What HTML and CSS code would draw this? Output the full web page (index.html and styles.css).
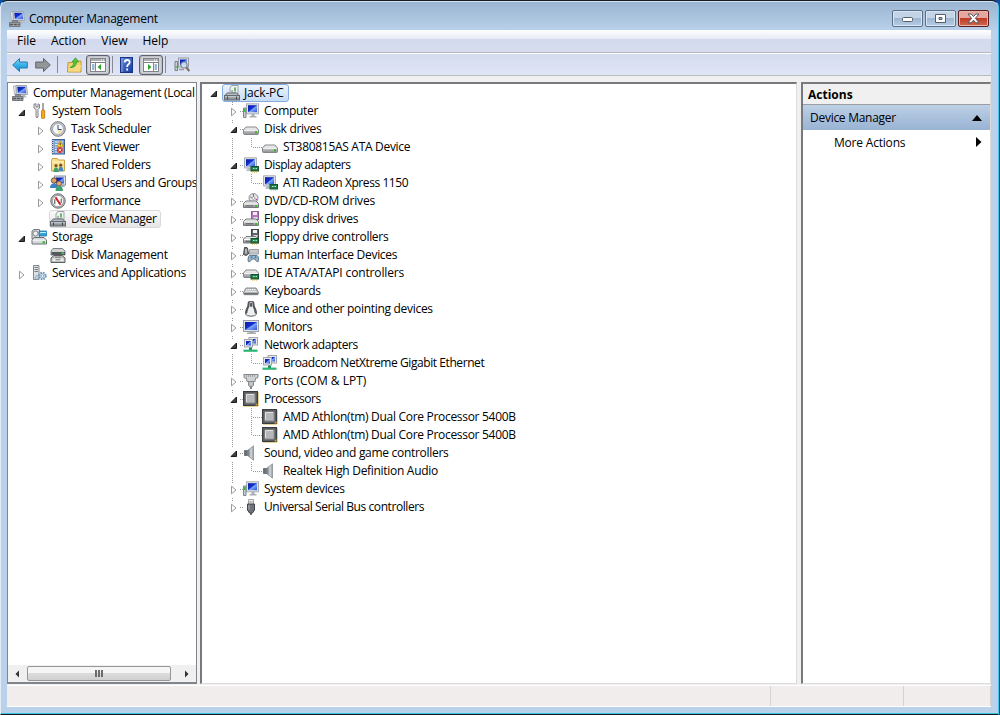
FILE: index.html
```html
<!DOCTYPE html>
<html lang="en">
<head>
  <meta charset="UTF-8">
  <meta name="viewport" content="width=device-width, initial-scale=1.0">
  <title>Computer Management</title>
  <link rel="stylesheet" href="styles.css">
</head>
<body>
  <svg class="sprite" width="0" height="0">
    <defs>
      <linearGradient id="screen" x1="0" y1="0" x2="1" y2="1">
        <stop offset="0" stop-color="#0a1ca8"/>
        <stop offset=".45" stop-color="#1230cf"/>
        <stop offset=".55" stop-color="#7fa4f5"/>
        <stop offset="1" stop-color="#2a50dc"/>
      </linearGradient>
      <linearGradient id="metal" x1="0" y1="0" x2="0" y2="1">
        <stop offset="0" stop-color="#f4f4f4"/>
        <stop offset="1" stop-color="#8d9093"/>
      </linearGradient>
      <linearGradient id="cone" x1="0" y1="0" x2="1" y2="0">
        <stop offset="0" stop-color="#5d646b"/>
        <stop offset=".6" stop-color="#d5dae0"/>
        <stop offset="1" stop-color="#8b9198"/>
      </linearGradient>
      <linearGradient id="blueArrow" x1="0" y1="0" x2="0" y2="1">
        <stop offset="0" stop-color="#8fd8f8"/>
        <stop offset=".5" stop-color="#35b0ea"/>
        <stop offset="1" stop-color="#1a8fd0"/>
      </linearGradient>
      <linearGradient id="helpBlue" x1="0" y1="0" x2="1" y2="1">
        <stop offset="0" stop-color="#5e85de"/>
        <stop offset="1" stop-color="#173a9c"/>
      </linearGradient>
    </defs>
    <symbol id="open" viewBox="0 0 8 8"><path d="M6.500 1v5.500H1z" fill="#404040" stroke="#1c1c1c"/></symbol>
    <symbol id="closed" viewBox="0 0 8 10"><path d="M1.500 1.200v7.600l4.500-3.800z" fill="#fff" stroke="#9a9a9a"/></symbol>
    <symbol id="monitor" viewBox="0 0 16 16">
      <path d="M6 12h5v1.500h2V15H4v-1.500h2z" fill="#a9adb2"/>
      <rect x=".5" y="1.500" width="15" height="11" fill="#dfe3e8" stroke="#9ba1a8"/>
      <rect x="2" y="3" width="12" height="8" fill="url(#screen)"/>
    </symbol>
    <symbol id="mgmt" viewBox="0 0 16 16">
      <path d="M1.500 1H4v8.500H2.500z" fill="#f4f5f6" stroke="#a0a5aa" stroke-width=".8"/>
      <path d="M4 .5h10.500l1 9H5z" fill="#e3e6ea" stroke="#a0a5ac"/>
      <path d="M5.200 1.800h8.300l.8 6.400H6z" fill="url(#screen)"/>
      <path d="M9 10h4l2 2.500h-4z" fill="#b9bdc1"/>
      <path d="M3.500 9.500h5v2h-5z" fill="#8b9095" stroke="#63676b" stroke-width=".7"/>
      <path d="M.5 11.500h10.500v4H.5z" fill="#a9acae" stroke="#75787b"/>
      <path d="M1 13.500h9.500" stroke="#55585b" stroke-width="1.500" stroke-dasharray="3 .8"/>
    </symbol>
    <symbol id="tools" viewBox="0 0 16 16">
      <path d="M3 1v4l2 1.500V14q1 1.500 2 0V6.500L8.500 5V1.500L7 .8V4H5V.8z" fill="#e9e9e9" stroke="#75787b" stroke-width=".9"/>
      <path d="M12 0v8" stroke="#8a8d90" stroke-width="1.500"/>
      <rect x="10.500" y="7" width="3.200" height="8.500" rx="1.200" fill="#f5a91b" stroke="#c06e08" stroke-width=".8"/>
    </symbol>
    <symbol id="clock" viewBox="0 0 16 16">
      <circle cx="8" cy="8" r="7.300" fill="#c4c6c9" stroke="#77797d"/>
      <circle cx="8" cy="8" r="5.400" fill="#f3f8fd" stroke="#999" stroke-width=".7"/>
      <path d="M8 8.500h4.500A4.500 4.500 0 0 1 8 12.700z" fill="#f4e2b4"/>
      <path d="M8 4v4.500h3.500" fill="none" stroke="#334a6b"/>
    </symbol>
    <symbol id="event" viewBox="0 0 16 16">
      <rect x="2.500" y=".5" width="12" height="14.500" fill="#7d9fd3" stroke="#3d5f96"/>
      <path d="M5 3h8M5 5.500h4M5 8h8M5 10.500h8M5 13h8" stroke="#e5eefa"/>
      <path d="M2.500 1v14" stroke="#c9ccd1" stroke-width="2.500" stroke-dasharray="1 1"/>
      <path d="M10.200 1.800l3.500 6h-7z" fill="#ffd22e" stroke="#b98a10" stroke-width=".7"/>
      <path d="M10.200 3.800v2.500" stroke="#333"/>
      <circle cx="9.800" cy="11" r="3" fill="#dd3327"/>
      <path d="M8.500 9.700l2.600 2.600m0-2.600l-2.600 2.600" stroke="#fff" stroke-width=".9"/>
    </symbol>
    <symbol id="shared" viewBox="0 0 16 16">
      <path d="M1.500 3.500l1-2h5l1 1.500h6v11h-13z" fill="#f7e08c" stroke="#c9a446"/>
      <path d="M2 5h12" stroke="#fff5c7"/>
      <circle cx="6" cy="8.700" r="1.600" fill="#77512f"/><circle cx="10.700" cy="8.200" r="1.600" fill="#77512f"/>
      <path d="M3.500 15q0-4.500 2.500-4.500t2.700 4.500z" fill="#3aa06d"/><path d="M8.500 14.200q0-4.400 2.300-4.400t2.500 4.400z" fill="#4387c8"/>
    </symbol>
    <symbol id="users" viewBox="0 0 16 16">
      <rect x="4.500" y="1" width="11" height="9" fill="#dfe3e8" stroke="#8c939c"/>
      <rect x="6" y="2.500" width="8" height="6" fill="url(#screen)"/>
      <path d="M10 10h4l1 2h-5z" fill="#a5a9ae"/>
      <circle cx="4" cy="5.500" r="2.700" fill="#d9a070" stroke="#5d3818" stroke-width=".8"/>
      <path d="M0 13q0-4.500 4-4.500t4 4.500z" fill="#3c80ca"/>
      <circle cx="9" cy="8.500" r="2.400" fill="#e5b07d" stroke="#6e4524" stroke-width=".8"/>
      <path d="M5.500 16q0-5 3.700-5t3.800 5z" fill="#3da072"/>
    </symbol>
    <symbol id="perf" viewBox="0 0 16 16">
      <circle cx="8" cy="8" r="7.200" fill="#b9bbbe" stroke="#6b6d70"/>
      <circle cx="8" cy="8" r="5.600" fill="#fff" stroke="#7a7c7e" stroke-width=".6"/>
      <path d="M4.800 11V6.200M11.200 10V5.500" stroke="#444" stroke-width="1"/>
      <path d="M5.500 4.300l5 7.400" stroke="#d02020" stroke-width="2"/>
    </symbol>
    <symbol id="devmgr" viewBox="0 0 16 16">
      <path d="M7.500.5H14v9H6V3z" fill="#eef0f1" stroke="#a0a4a8"/>
      <path d="M11 2.500v4" stroke="#3da341" stroke-width="1.500"/>
      <path d="M8 5v3h4" fill="none" stroke="#777c80"/>
      <path d="M3 8h10l1.800 2.500H1.200z" fill="#b8bdc1" stroke="#6a7076"/>
      <rect x=".5" y="10.500" width="15" height="4.500" fill="#8c949a" stroke="#656b70"/>
      <path d="M1 11.800h14" stroke="#d6dbde"/>
      <path d="M3.500 11.500v3M12.500 11.500v3" stroke="#42474c"/>
    </symbol>
    <symbol id="storage" viewBox="0 0 16 16">
      <path d="M1 2l2-1.500h5.500V9L1 10z" fill="#d4d6d9" stroke="#777c81"/>
      <circle cx="4.500" cy="4.500" r="2.500" fill="#eef1ef" stroke="#888"/>
      <rect x="8" y="2" width="8" height="5" rx="1" fill="#2fa3dd" stroke="#286d96" stroke-width=".8"/>
      <path d="M9 3.500h6" stroke="#c2edff"/>
      <path d="M3 8.500h10l2.500 2.500v4H1v-4z" fill="#d6d9db" stroke="#6b7074"/>
      <path d="M1.500 11.200h13.500" stroke="#f8f8f8"/>
      <rect x="11.500" y="12.200" width="2.500" height="2" fill="#39c22e"/>
    </symbol>
    <symbol id="disk" viewBox="0 0 16 16">
      <path d="M3 1.500h9.500L15 4v4H1V4z" fill="#d2d2d2" stroke="#808386"/>
      <path d="M1.500 5h13.500v3H1.500z" fill="#54595d"/><rect x="11.500" y="5.500" width="2.500" height="1.500" fill="#45d23a"/>
      <path d="M4 8.500h8l3 2.500v4.500H1V11z" fill="#c1c2c3" stroke="#5b5e61"/>
      <path d="M2.500 11.500h11v2.500h-11z" fill="#ededed"/><path d="M5 10.200h6M5.500 12.800h5" stroke="#777"/>
    </symbol>
    <symbol id="services" viewBox="0 0 16 16">
      <path d="M2.500.5H8v14H2.500z" fill="#dfe2e4" stroke="#83888d"/>
      <path d="M3.500 2.500h3.500M3.500 4.500h3.500M3.500 6.500h3.500" stroke="#777c82"/>
      <circle cx="11.500" cy="11" r="3.300" fill="#bdd5e8" stroke="#6e97b8" stroke-width="1.800" stroke-dasharray="1.600 1"/>
      <circle cx="11.500" cy="11" r="1.200" fill="#fff" stroke="#5f849f" stroke-width=".5"/>
      <circle cx="6" cy="12.500" r="1.900" fill="#bdd5e8" stroke="#708fa7" stroke-dasharray="1 .7"/>
    </symbol>
    <symbol id="computer" viewBox="0 0 16 16">
      <rect x="3.500" y=".8" width="12" height="10" fill="#dfe3e8" stroke="#a8adb3"/>
      <rect x="5" y="2.200" width="9" height="7" fill="url(#screen)"/>
      <path d="M8.500 11h3v2h2v1.500h-7V13h2z" fill="#aaafb4"/>
      <path d="M.5 5h2.500v9.500H.5z" fill="#c9cdd0" stroke="#81868b"/>
      <path d="M1.800 6v3" stroke="#2dba31" stroke-width="1.500"/>
    </symbol>
    <symbol id="drive" viewBox="0 0 16 16">
      <path d="M3 6h10l2.500 3v3.500q0 1-1 1h-13q-1 0-1-1V9z" fill="url(#metal)" stroke="#84888c"/>
      <path d="M2.500 8.500L3.500 7h9l1.200 1.500z" fill="#e7e7e7"/>
      <path d="M1 9.300h14" stroke="#fcfcfc"/>
      <rect x="12" y="10.200" width="2" height="2.300" fill="#3db52d"/>
    </symbol>
    <symbol id="card" viewBox="0 0 16 16">
      <rect x="8" y="9.500" width="7.500" height="4.500" fill="#217d4c" stroke="#155235"/>
      <path d="M9 15h5" stroke="#d6aa31" stroke-dasharray="1 1"/>
      <path d="M10 11.500h1.500M12.500 11.500H14" stroke="#b9e8bd"/>
    </symbol>
    <symbol id="display" viewBox="0 0 16 16">
      <path d="M5 11h4v3H3z" fill="#b9bdc1"/>
      <path d="M1.500.8h12v10.200h-12z" fill="#dfe3e8" stroke="#a8adb3"/>
      <rect x="3" y="2.200" width="9" height="7.300" fill="url(#screen)"/>
      <use href="#card"/>
    </symbol>
    <symbol id="dvd" viewBox="0 0 16 16">
      <circle cx="10.500" cy="5" r="4.500" fill="#e4e1ea" stroke="#95949b"/>
      <path d="M10.500 1v3M12.500 6l2 1" stroke="#a44ba4"/><path d="M7 4l2 .7" stroke="#6cae62"/><circle cx="10.500" cy="5" r="1.300" fill="#fff" stroke="#888" stroke-width=".6"/>
      <path d="M3 8h10l2.500 2.500v4h-15v-4z" fill="url(#metal)" stroke="#777b80"/>
      <path d="M1 11h14" stroke="#fff"/><path d="M2.500 12.800h8" stroke="#686c70"/>
      <rect x="12" y="12" width="2" height="2" fill="#3db52d"/>
    </symbol>
    <symbol id="floppy" viewBox="0 0 16 16">
      <rect x="8.500" y=".5" width="7" height="8" fill="#b377bb" stroke="#8f6095"/>
      <rect x="10" y="1" width="4" height="3" fill="#f3eaf4"/><rect x="10.500" y="6" width="4" height="2" fill="#ddd"/>
      <path d="M3 8h10l2.500 2.500v4h-15v-4z" fill="url(#metal)" stroke="#777b80"/>
      <path d="M1 11h14" stroke="#fff"/><path d="M2.500 12.800h8" stroke="#55585c"/>
      <rect x="12" y="12" width="2" height="2" fill="#3db52d"/>
    </symbol>
    <symbol id="floppyctl" viewBox="0 0 16 16">
      <rect x="8.500" y=".5" width="7" height="8" fill="#606468" stroke="#414449"/>
      <rect x="10" y="1" width="4" height="3" fill="#f3f3f4"/><rect x="10.500" y="6" width="4" height="2" fill="#ddd"/>
      <path d="M3 7.500h10l2.500 2.500v4h-15v-4z" fill="url(#metal)" stroke="#777b80"/>
      <path d="M1 10.500h14" stroke="#fff"/><path d="M2.500 12.300h6" stroke="#55585c"/>
      <use href="#card"/>
    </symbol>
    <symbol id="hid" viewBox="0 0 16 16">
      <path d="M1.500.5Q3 0 4.500 1l1 6Q3.500 9.500.5 7.500z" fill="#777e86" stroke="#454a50"/>
      <path d="M3 2v4.500" stroke="#e9ebed"/>
      <path d="M6.500 2.500h9v4.500h-9z" fill="#dfe1e4" stroke="#9b9fa4"/><path d="M7.500 4h8M7.500 5.700h8" stroke="#888" stroke-dasharray="1 1"/>
      <path d="M5.500 9.500q1-2 3-1h3.500q2-1 3 1l.8 4q-.6 2.500-2.500.6L11.800 12H9.200L7 14.500q-2 1-2-1.500z" fill="#a4b5c5" stroke="#5c7489"/>
      <circle cx="8.500" cy="10.200" r="1" fill="#1f86ca"/><circle cx="12.500" cy="10.200" r="1" fill="#1f86ca"/>
    </symbol>
    <symbol id="ide" viewBox="0 0 16 16">
      <path d="M3 5h10l2.500 3v3.500q0 1-1 1h-13q-1 0-1-1V8z" fill="url(#metal)" stroke="#84888c"/>
      <path d="M2.500 7.500L3.500 6h9l1.200 1.500z" fill="#e7e7e7"/>
      <path d="M1 8.300h14" stroke="#f8f8f8"/>
      <use href="#card"/>
    </symbol>
    <symbol id="keyboard" viewBox="0 0 16 16">
      <path d="M3 5h10l2.500 4.500-.8 2.200H1.300L.5 9.500z" fill="#b9bcbf" stroke="#85898d"/>
      <path d="M3 6.700h10M2.200 8.500h11.600" stroke="#f8f8f8" stroke-width="1.200" stroke-dasharray="1.300 .7"/>
      <path d="M.8 10.700h14.400" stroke="#6d7175" stroke-width="1.500"/>
    </symbol>
    <symbol id="mouse" viewBox="0 0 16 16">
      <path d="M5.500.7q2.500-.6 5 0l.5 4q3 5 2.500 8.500-1 2-5.500 2t-5.500-2q-.5-3.500 2.500-8.500z" fill="#eeeff0" stroke="#5c6167"/>
      <path d="M5.800 1L5.500 5q-2 4-2.200 7.500M10.200 1l.3 4q2 4 2.200 7.500" fill="none" stroke="#51565c" stroke-width="1.800"/>
      <rect x="7" y="1.500" width="2" height="4.500" rx="1" fill="#555a60"/>
    </symbol>
    <symbol id="network" viewBox="0 0 16 16">
      <rect x="6" y=".5" width="8.500" height="7.500" fill="#e7e9ec" stroke="#a1a6ae"/><rect x="7.500" y="2" width="5.500" height="4.500" fill="url(#screen)"/>
      <rect x="1.500" y="2.500" width="8" height="7.500" fill="#e7e9ec" stroke="#a1a6ae"/><rect x="3" y="4" width="5" height="4.500" fill="url(#screen)"/>
      <path d="M7.500 10.500v3" stroke="#168c55" stroke-width="3"/><path d="M.5 13.700h14" stroke="#2cb575" stroke-width="2.200"/>
    </symbol>
    <symbol id="port" viewBox="0 0 16 16">
      <path d="M.8 1.500h14.400l-.5 3.500h-2L12 8.500H4L3.300 5h-2z" fill="#cfd2d5" stroke="#83888d"/>
      <path d="M3 3h10" stroke="#777" stroke-dasharray="1 1"/>
      <path d="M5.500 8.500h5v4l-1.500 1.200h-2l-1.500-1.200z" fill="#bfc3c7" stroke="#84898e"/><path d="M8 13.500V16" stroke="#777b80" stroke-width="1.800"/>
    </symbol>
    <symbol id="cpu" viewBox="0 0 16 16">
      <path d="M1.500 15.500h14M15.500 1.500v14" stroke="#caa02d" stroke-dasharray="1 1"/>
      <rect x=".5" y=".5" width="14" height="14" fill="#5a5d60" stroke="#3b3e41"/>
      <rect x="3" y="3" width="9" height="9" fill="#b5b7b9" stroke="#8d9093"/>
      <path d="M3.500 11V3.500H11" fill="none" stroke="#e1e1e1"/><path d="M12 14.500l2.500-2.500v2.500z" fill="#e9a82a"/>
    </symbol>
    <symbol id="sound" viewBox="0 0 16 16">
      <path d="M1.500 5.500h3v5h-3z" fill="#6b7178" stroke="#50565c" stroke-width=".7"/>
      <path d="M4.500 5.500L10.500.8v14.400l-6-4.700z" fill="url(#cone)" stroke="#83898f" stroke-width=".7"/>
    </symbol>
    <symbol id="usb" viewBox="0 0 16 16">
      <path d="M5.500.5h5v5h-5z" fill="#eeeff0" stroke="#a2a6ab"/><path d="M7 2v2M9 2v2" stroke="#999"/>
      <path d="M4.500 5h7v6L9.500 14h-3l-2-3z" fill="#6d7379" stroke="#42474c"/><path d="M6 6v4.500" stroke="#b2b7bb"/><path d="M8 14v2" stroke="#4b5055" stroke-width="1.600"/>
    </symbol>
    <symbol id="back" viewBox="0 0 16 16"><path d="M.7 8L7.500 1.500V5h7.800v6H7.500v3.500z" fill="url(#blueArrow)" stroke="#2b79a9"/></symbol>
    <symbol id="forward" viewBox="0 0 16 16"><path d="M15.300 8L8.500 1.500V5H.7v6h7.800v3.500z" fill="#929699" stroke="#606468"/></symbol>
    <symbol id="upfolder" viewBox="0 0 16 16">
      <path d="M1.500 15l.5-9.500h4l1-1.500h8v11z" fill="#f3d273" stroke="#c39a3d"/>
      <path d="M2 14.500l1.500-6.500H15l-1 6.500z" fill="#f6d983"/>
      <path d="M4 10.500q4-1 4-5.500H6L9.500.8 12.500 5h-2q-.5 6-6.500 5.500z" fill="#51cb34" stroke="#2a8e1c" stroke-width=".7"/>
    </symbol>
    <symbol id="pane" viewBox="0 0 16 16">
      <rect x=".5" y="1.500" width="15" height="13" fill="#fff" stroke="#808488"/>
      <path d="M1 3h14" stroke="#aaaeb2" stroke-width="2"/><path d="M11 3h4" stroke="#fff" stroke-dasharray="1 1"/>
      <path d="M1 5.500h14" stroke="#797d81"/>
    </symbol>
    <symbol id="paneleft" viewBox="0 0 16 16"><use href="#pane"/><path d="M5.500 6v8" stroke="#888"/><path d="M2 8h2.500M2 10h2.500M2 12h2.500" stroke="#3a6ea5"/><path d="M11 7v6L7.500 10z" fill="#2da329"/></symbol>
    <symbol id="paneright" viewBox="0 0 16 16"><use href="#pane"/><path d="M10.500 6v8" stroke="#888"/><path d="M11.500 8H14M11.500 10H14M11.500 12H14" stroke="#3a6ea5"/><path d="M5 7v6l3.500-3z" fill="#2da329"/></symbol>
    <symbol id="help" viewBox="0 0 16 16">
      <rect x="1.500" y=".5" width="12" height="15" fill="url(#helpBlue)" stroke="#173784"/><path d="M3 1v14" stroke="#89a6e6"/>
      <path d="M5.700 5.500Q5.700 3 8.200 3t2.500 2.200Q10.700 6.700 9.200 7.500 8.200 8.200 8.200 10M8.200 11.500v2" fill="none" stroke="#fff" stroke-width="1.800"/>
    </symbol>
    <symbol id="scan" viewBox="0 0 16 16">
      <path d="M1 4.500h2.500v9H1z" fill="#cfd2d5" stroke="#777d83"/><path d="M2.200 9v2" stroke="#39b735"/>
      <rect x="4.500" y="1" width="10" height="9" fill="#dce1e8" stroke="#979ca3"/><rect x="6" y="2.500" width="7" height="6" fill="url(#screen)"/>
      <path d="M5 12.500h5" stroke="#979ca2" stroke-width="1.500"/>
      <circle cx="10" cy="8" r="3.200" fill="#cfe6f7" fill-opacity=".85" stroke="#777d83"/><path d="M12.300 10.500l3 3.500" stroke="#7a6f60" stroke-width="2"/>
    </symbol>
  </svg>

  <div class="window">
    <header class="titlebar">
      <svg class="icon"><use href="#mgmt"/></svg>
      <h1>Computer Management</h1>
      <div class="window-buttons">
        <button aria-label="Minimize"><svg class="min" width="13" height="6"><rect x="1.500" y=".5" width="10" height="4" rx="1" fill="#fff" stroke="#555f6c"/></svg></button>
        <button aria-label="Maximize"><svg width="11" height="9"><path fill-rule="evenodd" d="M.5.5h10v8H.5zM4 3.500v2h3v-2z" fill="#fff" stroke="#555f6c"/></svg></button>
        <button class="close" aria-label="Close"><svg width="13" height="11"><path d="M1 1h3.200l2.300 2.500L8.800 1H12L8.400 5.300 12 9.800H8.800L6.500 7.200 4.200 9.800H1l3.600-4.500z" fill="#fff" stroke="#55535f"/></svg></button>
      </div>
    </header>

    <div class="client">
      <nav class="menubar">
        <span>File</span><span>Action</span><span>View</span><span>Help</span>
      </nav>
      <div class="toolbar">
        <svg class="icon"><use href="#back"/></svg>
        <svg class="icon forward"><use href="#forward"/></svg>
        <i class="sep"></i>
        <svg class="icon folder"><use href="#upfolder"/></svg>
        <span class="pressed"><svg class="icon"><use href="#paneleft"/></svg></span>
        <i class="sep tight"></i>
        <svg class="icon"><use href="#help"/></svg>
        <span class="pressed last"><svg class="icon"><use href="#paneright"/></svg></span>
        <i class="sep tight"></i>
        <svg class="icon scan"><use href="#scan"/></svg>
      </div>

      <div class="panes">
        <section class="pane console">
          <ul class="tree">
            <li class="row root"><svg class="icon"><use href="#mgmt"/></svg><span>Computer Management (Local</span></li>
            <li class="row"><svg class="arrow"><use href="#open"/></svg><svg class="icon"><use href="#tools"/></svg><span>System Tools</span></li>
            <li class="row sub"><svg class="arrow"><use href="#closed"/></svg><svg class="icon"><use href="#clock"/></svg><span>Task Scheduler</span></li>
            <li class="row sub"><svg class="arrow"><use href="#closed"/></svg><svg class="icon"><use href="#event"/></svg><span>Event Viewer</span></li>
            <li class="row sub"><svg class="arrow"><use href="#closed"/></svg><svg class="icon"><use href="#shared"/></svg><span>Shared Folders</span></li>
            <li class="row sub"><svg class="arrow"><use href="#closed"/></svg><svg class="icon"><use href="#users"/></svg><span>Local Users and Groups</span></li>
            <li class="row sub"><svg class="arrow"><use href="#closed"/></svg><svg class="icon"><use href="#perf"/></svg><span>Performance</span></li>
            <li class="row sub"><i class="arrow"></i><div class="current"><svg class="icon"><use href="#devmgr"/></svg><span>Device Manager</span></div></li>
            <li class="row"><svg class="arrow"><use href="#open"/></svg><svg class="icon"><use href="#storage"/></svg><span>Storage</span></li>
            <li class="row sub"><i class="arrow"></i><svg class="icon"><use href="#disk"/></svg><span>Disk Management</span></li>
            <li class="row"><svg class="arrow"><use href="#closed"/></svg><svg class="icon"><use href="#services"/></svg><span>Services and Applications</span></li>
          </ul>
          <div class="scrollbar">
            <svg width="19" height="16"><path d="M11 4.500v7L7.500 8z" fill="#333"/></svg>
            <div class="thumb"><i></i><i></i><i></i></div>
            <svg width="24" height="16"><path d="M14 4.500v7L17.500 8z" fill="#333"/></svg>
          </div>
        </section>

        <section class="pane devices">
          <div class="pc"><svg class="arrow"><use href="#open"/></svg><div class="selected"><svg class="icon"><use href="#devmgr"/></svg><span class="loose">Jack-PC</span></div></div>
          <ul class="device-tree">
            <li><div class="row"><svg class="arrow"><use href="#closed"/></svg><svg class="icon"><use href="#computer"/></svg><span>Computer</span></div></li>
            <li><div class="row"><svg class="arrow"><use href="#open"/></svg><svg class="icon"><use href="#drive"/></svg><span>Disk drives</span></div>
              <ul><li class="row"><svg class="icon"><use href="#drive"/></svg><span>ST380815AS ATA Device</span></li></ul></li>
            <li><div class="row"><svg class="arrow"><use href="#open"/></svg><svg class="icon"><use href="#display"/></svg><span class="tight">Display adapters</span></div>
              <ul><li class="row"><svg class="icon"><use href="#display"/></svg><span class="tight">ATI Radeon Xpress 1150</span></li></ul></li>
            <li><div class="row"><svg class="arrow"><use href="#closed"/></svg><svg class="icon"><use href="#dvd"/></svg><span class="loose">DVD/CD-ROM drives</span></div></li>
            <li><div class="row"><svg class="arrow"><use href="#closed"/></svg><svg class="icon"><use href="#floppy"/></svg><span>Floppy disk drives</span></div></li>
            <li><div class="row"><svg class="arrow"><use href="#closed"/></svg><svg class="icon"><use href="#floppyctl"/></svg><span>Floppy drive controllers</span></div></li>
            <li><div class="row"><svg class="arrow"><use href="#closed"/></svg><svg class="icon"><use href="#hid"/></svg><span>Human Interface Devices</span></div></li>
            <li><div class="row"><svg class="arrow"><use href="#closed"/></svg><svg class="icon"><use href="#ide"/></svg><span class="loose">IDE ATA/ATAPI controllers</span></div></li>
            <li><div class="row"><svg class="arrow"><use href="#closed"/></svg><svg class="icon"><use href="#keyboard"/></svg><span>Keyboards</span></div></li>
            <li><div class="row"><svg class="arrow"><use href="#closed"/></svg><svg class="icon"><use href="#mouse"/></svg><span>Mice and other pointing devices</span></div></li>
            <li><div class="row"><svg class="arrow"><use href="#closed"/></svg><svg class="icon"><use href="#monitor"/></svg><span>Monitors</span></div></li>
            <li><div class="row"><svg class="arrow"><use href="#open"/></svg><svg class="icon"><use href="#network"/></svg><span class="tight">Network adapters</span></div>
              <ul><li class="row"><svg class="icon"><use href="#network"/></svg><span class="tight">Broadcom NetXtreme Gigabit Ethernet</span></li></ul></li>
            <li><div class="row"><svg class="arrow"><use href="#closed"/></svg><svg class="icon"><use href="#port"/></svg><span class="normal">Ports (COM &amp; LPT)</span></div></li>
            <li><div class="row"><svg class="arrow"><use href="#open"/></svg><svg class="icon"><use href="#cpu"/></svg><span class="tight">Processors</span></div>
              <ul>
                <li class="row"><svg class="icon"><use href="#cpu"/></svg><span>AMD Athlon(tm) Dual Core Processor 5400B</span></li>
                <li class="row"><svg class="icon"><use href="#cpu"/></svg><span>AMD Athlon(tm) Dual Core Processor 5400B</span></li>
              </ul></li>
            <li><div class="row"><svg class="arrow"><use href="#open"/></svg><svg class="icon"><use href="#sound"/></svg><span>Sound, video and game controllers</span></div>
              <ul><li class="row"><svg class="icon"><use href="#sound"/></svg><span>Realtek High Definition Audio</span></li></ul></li>
            <li><div class="row"><svg class="arrow"><use href="#closed"/></svg><svg class="icon"><use href="#computer"/></svg><span>System devices</span></div></li>
            <li><div class="row"><svg class="arrow"><use href="#closed"/></svg><svg class="icon"><use href="#usb"/></svg><span class="tight">Universal Serial Bus controllers</span></div></li>
          </ul>
        </section>

        <section class="pane actions">
          <h2>Actions</h2>
          <div class="action-group"><span>Device Manager</span><svg width="10" height="6"><path d="M5 0l5 6H0z"/></svg></div>
          <div class="action-item"><span>More Actions</span><svg width="6" height="10"><path d="M0 0l5.500 5L0 10z"/></svg></div>
        </section>
      </div>

      <footer class="statusbar"><span></span><span></span><span></span></footer>
    </div>
  </div>
</body>
</html>
```

FILE: styles.css
```css
* {
  box-sizing: border-box;
}

body {
  margin: 0;
  height: 715px;
  overflow: hidden;
  background: #0b4fa0;
  font-family: "Open Sans", "Noto Sans", sans-serif;
  font-size: 12px;
  color: #000;
}

ul {
  list-style: none;
  margin: 0;
  padding: 0;
}

h1, h2 {
  margin: 0;
  font-size: 12px;
}

.sprite {
  position: absolute;
}

.icon {
  width: 16px;
  height: 16px;
  flex: none;
}

.window {
  display: flex;
  flex-direction: column;
  width: 999px;
  height: 715px;
  padding: 0 7px 7px 6px;
  border: 1px solid #151b22;
  border-left-color: #e2edf8;
  border-right-color: #43c8e8;
  border-radius: 7px 7px 0 0;
  background: linear-gradient(#9ab3d0, #b9d1ea 30px);
  box-shadow: inset 0 -1px #36c3dd, inset 0 1px #d3e1ef;
}

.titlebar {
  display: flex;
  align-items: center;
  height: 29px;
  padding: 7px 2px 0 2px;
}

.titlebar h1 {
  margin: -1px 0 0 4px;
  font-weight: normal;
  letter-spacing: -0.27px;
}

.window-buttons {
  display: flex;
  gap: 2px;
  margin: -2px 0 0 auto;
}

.window-buttons button {
  display: flex;
  align-items: center;
  justify-content: center;
  width: 31px;
  height: 17px;
  padding: 0;
  border: 1px solid #5c7188;
  border-radius: 2px;
  background: linear-gradient(#c3d4e7 48%, #9eb6d1 50%, #b7cde5);
  box-shadow: inset 0 0 0 1px #d8e5f2;
}

.window-buttons .min {
  margin-top: 4px;
}

.window-buttons .close {
  border-color: #5b1c20;
  background: linear-gradient(#e5a79d 45%, #bf3a24 50%, #d06b50);
  box-shadow: inset 0 0 0 1px #e9b4aa;
}

.client {
  display: flex;
  flex-direction: column;
  flex: 1;
  background: #f0f0f0;
  border-bottom: 1px solid #fff;
}

.menubar {
  display: flex;
  gap: 15px;
  height: 24px;
  padding: 2px 0 0 10px;
  border-bottom: 1px solid #fff;
  background: linear-gradient(#fff, #e5eaf5 9px, #d3daed 9px, #d6dcee 21px, #d6dcee 22px, #b5b8c0 22px);
  line-height: 18px;
}

.toolbar {
  display: flex;
  align-items: center;
  height: 22px;
  padding-left: 5px;
  background: linear-gradient(#d4dbed, #e0e6f6);
  border-bottom: 1px solid #b9bcc4;
}

.toolbar .forward {
  margin-left: 7px;
}

.sep {
  width: 1px;
  height: 17px;
  margin: 0 8px 0 6px;
  background: #858a94;
}

.sep.tight {
  margin: 0 6px 0 2px;
}

.toolbar .pressed {
  display: flex;
  align-items: center;
  justify-content: center;
  width: 24px;
  height: 20px;
  margin-left: 4px;
  border: 1px solid #5f6369;
  border-radius: 3px;
  background: #d2d5dc;
  box-shadow: inset 0 0 2px #888;
}

.toolbar .scan {
  margin-left: 2px;
}

.panes {
  display: grid;
  grid-template-columns: 190px 597px 189px;
  column-gap: 4px;
  height: 602px;
  margin-top: 6px;
}

.pane {
  display: flex;
  flex-direction: column;
  min-width: 0;
  overflow: hidden;
  background: #fff;
  border: 1px solid #dcdcdc;
  border-top: 2px solid #77797c;
  border-left: 2px solid #77797c;
}

.console {
  border: 1px solid #82868c;
  border-bottom-width: 2px;
}

/* the left and right gutters are not the same width */
.devices {
  margin: 0 1px 0 -1px;
}

.actions {
  margin-left: -1px;
}

.row {
  display: flex;
  align-items: center;
  height: 18px;
  white-space: nowrap;
}

.row span,
.selected span {
  line-height: 18px;
  letter-spacing: -0.3px;
}

.row .tight {
  letter-spacing: -0.42px;
}

.row .loose,
.selected .loose {
  letter-spacing: -0.14px;
}

.row .normal {
  letter-spacing: 0;
}

.console .tree {
  flex: 1;
  padding-top: 1px;
}

.console .row {
  padding-left: 10px;
}

.console .sub {
  padding-left: 29px;
}

.console .root {
  padding-left: 4px;
}

.console .arrow {
  width: 8px;
  height: 10px;
  margin: 3px 5px 0 0;
  flex: none;
}

.console .row span {
  margin-left: 5px;
}

.current,
.selected {
  display: flex;
  align-items: center;
  height: 18px;
  border: 1px solid #d9d9d9;
  border-radius: 3px;
  background: linear-gradient(#fafafa, #e6e6e6);
}

.current {
  margin-left: -1px;
  padding-right: 3px;
}

.scrollbar {
  display: flex;
  align-items: center;
  height: 17px;
  background: #f0f0f0;
}

.thumb {
  display: flex;
  align-items: center;
  justify-content: center;
  gap: 1px;
  width: 144px;
  height: 15px;
  border: 1px solid #979797;
  border-radius: 2px;
  background: linear-gradient(#f5f5f5 45%, #dcdcdc 50%, #cfcfcf);
}

.thumb i {
  width: 2px;
  height: 7px;
  background: #6b6b6b;
}

.devices .pc {
  display: flex;
  align-items: center;
  height: 18px;
  padding-left: 8px;
}

.devices .arrow {
  width: 8px;
  height: 10px;
  margin-top: 2px;
  flex: none;
}

.selected {
  margin-left: 4px;
  padding: 0 4px 0 1px;
  border-color: #84acdd;
  background: linear-gradient(#ebf4fd, #c5dcf7);
}

.selected span {
  margin-left: 4px;
}

/* dotted trunk behind the expanders */
.device-tree {
  background: repeating-linear-gradient(#999 0 1px, #fff 1px 2px) 30px 0 / 1px 400px no-repeat;
}

.device-tree .row {
  padding-left: 28px;
  background: repeating-linear-gradient(90deg, #999 0 1px, #fff 1px 2px) 38px 9px / 3px 1px no-repeat;
}

.device-tree .arrow {
  height: 14px;
  padding: 2px 0;
  background: #fff;
}

.device-tree .arrow + .icon {
  margin-left: 5px;
}

.device-tree .row > span {
  margin-left: 5px;
}

.device-tree ul {
  background: repeating-linear-gradient(#999 0 1px, #fff 1px 2px) 49px 0 / 1px calc(100% - 8px) no-repeat;
}

.device-tree ul .row {
  padding-left: 50px;
  background: none;
}

.device-tree ul .row::before {
  content: "";
  width: 10px;
  height: 1px;
  background: repeating-linear-gradient(90deg, #fff 0 1px, #999 1px 2px);
}

.actions h2 {
  height: 21px;
  padding-left: 5px;
  border-bottom: 1px solid #9b9da0;
  background: #f0f0f0;
  line-height: 21px;
}

.action-group {
  display: flex;
  align-items: center;
  justify-content: space-between;
  height: 25px;
  padding: 0 8px 0 7px;
  background: linear-gradient(#bdd0e6, #98b3d3);
  letter-spacing: -0.27px;
}

.action-item {
  display: flex;
  align-items: center;
  justify-content: space-between;
  height: 24px;
  padding: 0 8px 0 31px;
  letter-spacing: -0.2px;
}

.statusbar {
  display: grid;
  grid-template-columns: 764px 133px 1fr;
  flex: 1;
  margin-top: 1px;
  border-top: 1px solid #fff;
  background: #f0edec;
}

.statusbar span {
  border-right: 1px solid #d5d3d2;
}
```
